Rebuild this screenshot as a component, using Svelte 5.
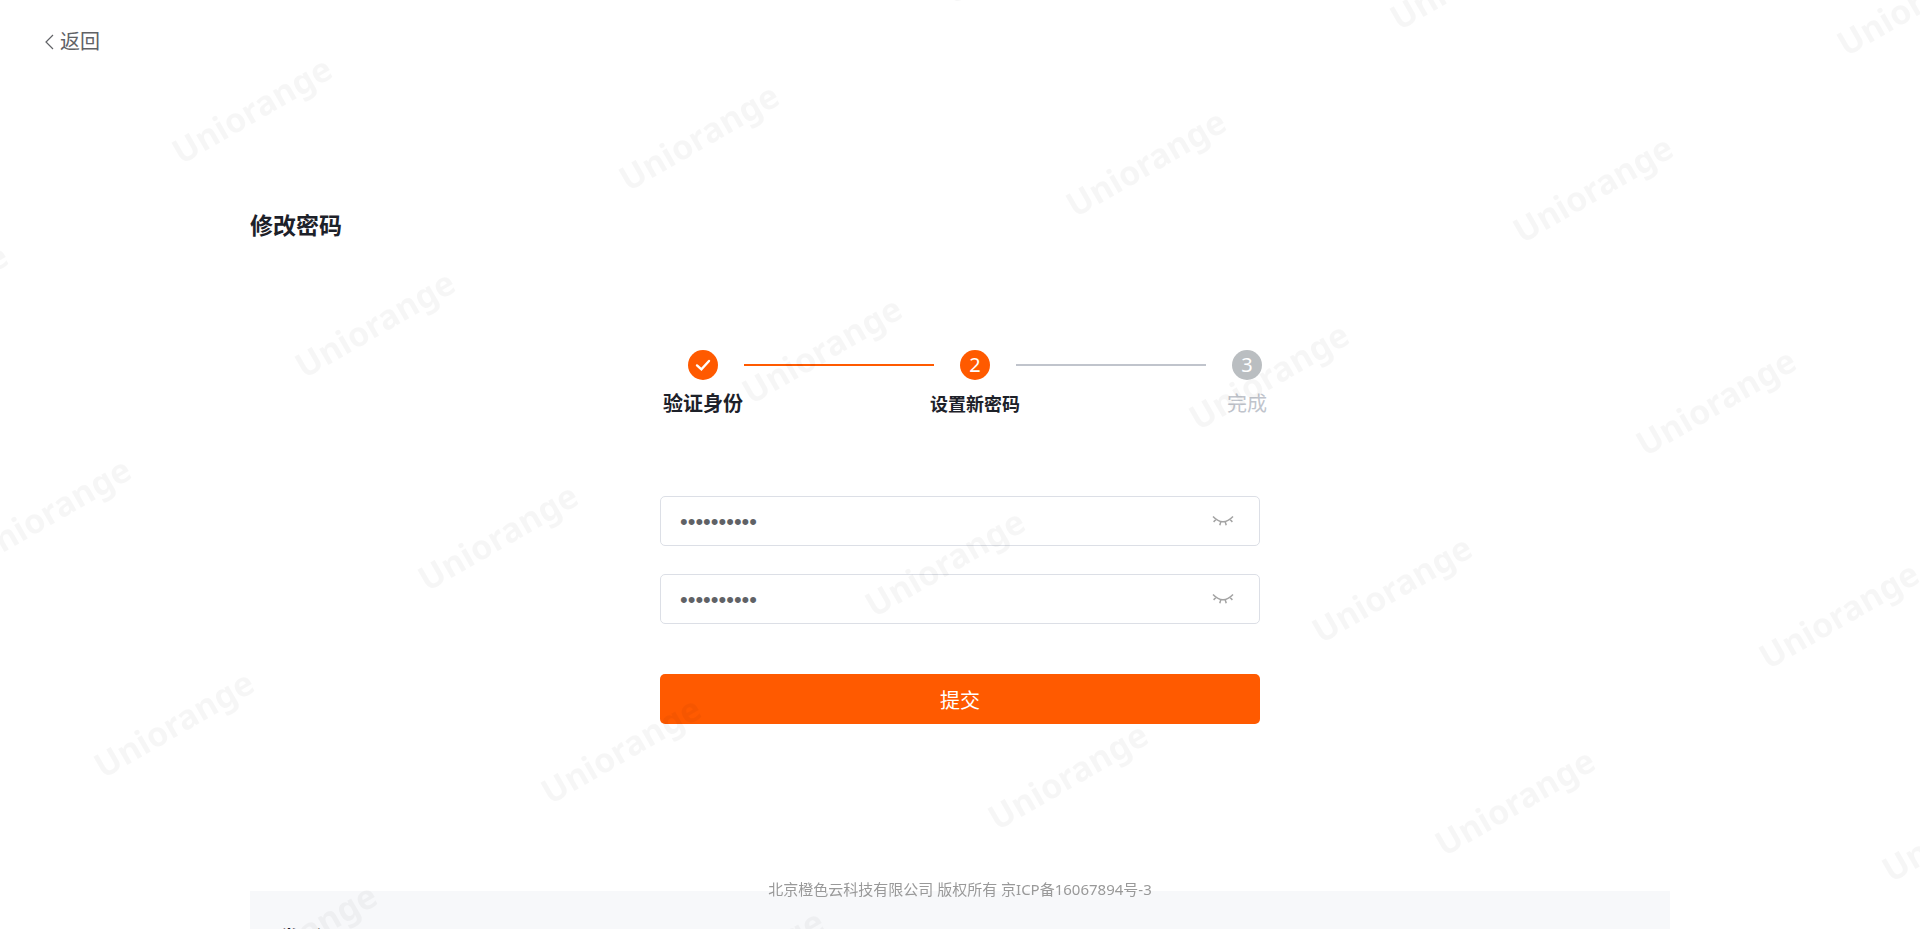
<script>
  let password = 'unior12345';
  let confirmPassword = 'unior12345';
  let showPassword = false;
  let showConfirm = false;

  const steps = [
    { title: '验证身份', status: 'finish' },
    { title: '设置新密码', status: 'process' },
    { title: '完成', status: 'wait' }
  ];

  let innerWidth = 0;
  let innerHeight = 0;

  // grid of marks laid out in a plane turned by -30deg, only the visible ones are kept
  function getMarks(width, height) {
    const angle = Math.PI / 6;
    const marks = [];
    for (let row = -1; row < 12; row++) {
      for (let col = -6; col < 8; col++) {
        const u = 163 + col * 374;
        const v = 224 + row * 246;
        const x = u * Math.cos(angle) + v * Math.sin(angle);
        const y = v * Math.cos(angle) - u * Math.sin(angle);
        if (x > -80 && x < width + 80 && y > -50 && y < height + 50) {
          marks.push({ x: Math.round(x), y: Math.round(y) });
        }
      }
    }
    return marks;
  }

  $: marks = getMarks(innerWidth, innerHeight);
</script>

<svelte:window bind:innerWidth bind:innerHeight />

<div class="page">
  <header class="header">
    <a class="back" href="#back">
      <svg width="9" height="16" viewBox="0 0 9 16" aria-hidden="true">
        <path d="M8 1L1 8l7 7" fill="none" stroke="currentColor" stroke-width="1.2" />
      </svg>
      返回
    </a>
  </header>

  <main class="main">
    <h1 class="title">修改密码</h1>

    <div class="content">
      <ol class="steps">
        {#each steps as step, i}
          {#if i > 0}
            <li class="step_line" class:active={step.status !== 'wait'} aria-hidden="true"></li>
          {/if}
          <li class="step {step.status}">
            <span class="step_icon">
              {#if step.status === 'finish'}
                <svg width="16" height="14" viewBox="0 0 16 14" aria-hidden="true">
                  <path d="M2 7.4l4.4 4L14 3" fill="none" stroke="#fff" stroke-width="2.4" stroke-linecap="round" />
                </svg>
              {:else}
                {i + 1}
              {/if}
            </span>
            <span class="step_title">{step.title}</span>
          </li>
        {/each}
      </ol>

      <form class="form" on:submit|preventDefault>
        <div class="field">
          <input type={showPassword ? 'text' : 'password'} aria-label="新密码" bind:value={password} />
          <button type="button" class="eye" aria-label="显示密码" on:click={() => (showPassword = !showPassword)}>
            <svg width="22" height="12" viewBox="0 0 22 12" aria-hidden="true">
              <path d="M1 1.5Q11 12 21 1.5M4.2 4.3L1.6 6.9M8.8 6.6L7.8 10.2M13.2 6.6l1 3.6M17.8 4.3l2.6 2.6" />
            </svg>
          </button>
        </div>
        <div class="field">
          <input type={showConfirm ? 'text' : 'password'} aria-label="确认密码" bind:value={confirmPassword} />
          <button type="button" class="eye" aria-label="显示密码" on:click={() => (showConfirm = !showConfirm)}>
            <svg width="22" height="12" viewBox="0 0 22 12" aria-hidden="true">
              <path d="M1 1.5Q11 12 21 1.5M4.2 4.3L1.6 6.9M8.8 6.6L7.8 10.2M13.2 6.6l1 3.6M17.8 4.3l2.6 2.6" />
            </svg>
          </button>
        </div>
        <button type="submit" class="submit">提交</button>
      </form>
    </div>

    <section class="faq">
      <h2>常见问题</h2>
    </section>
  </main>

  <footer class="footer">北京橙色云科技有限公司 版权所有 京ICP备16067894号-3</footer>

  <svg class="watermark" aria-hidden="true">
    {#each marks as mark}
      <text x={mark.x} y={mark.y} dy="10" transform="rotate(-30 {mark.x} {mark.y})">Uniorange</text>
    {/each}
  </svg>
</div>

<style>
  :global(body) {
    margin: 0;
    background: #fff;
  }

  .page {
    position: relative;
    height: 100vh;
    overflow: hidden;
    font-family: 'Noto Sans', 'Noto Sans CJK SC', sans-serif;
    color: #1d2129;
  }

  .header {
    padding: 26px 45px 0;
  }

  .back {
    display: inline-flex;
    align-items: center;
    gap: 6px;
    height: 32px;
    font-size: 20px;
    line-height: 32px;
    color: #606266;
    text-decoration: none;
  }

  .main {
    max-width: 1420px;
    margin: 0 auto;
    padding-top: 147px;
  }

  .title {
    margin: 0;
    font-size: 23px;
    line-height: 40px;
    font-weight: 700;
  }

  .content {
    width: 600px;
    max-width: 100%;
    margin: 105px auto 0;
  }

  .steps {
    display: flex;
    width: max-content;
    margin: 0;
    padding: 0 2px;
    list-style: none;
  }

  .step {
    display: flex;
    flex-direction: column;
    align-items: center;
    gap: 8px;
    width: 82px;
  }

  .step_icon {
    display: flex;
    align-items: center;
    justify-content: center;
    width: 30px;
    height: 30px;
    border-radius: 50%;
    background: #ff5a00;
    color: #fff;
    font-size: 20px;
    line-height: 30px;
  }

  .step_title {
    font-size: 20px;
    line-height: 32px;
    font-weight: 700;
    white-space: nowrap;
  }

  .process .step_title {
    font-size: 18px;
  }

  .wait .step_icon {
    background: #babec1;
  }

  .wait .step_title {
    font-weight: 400;
    color: #c0c4cc;
  }

  .step_line {
    width: 190px;
    height: 2px;
    margin-top: 14px;
    background: #c0c4cc;
  }

  .step_line.active {
    background: #ff5a00;
  }

  .form {
    display: flex;
    flex-direction: column;
    gap: 28px;
    margin-top: 76px;
  }

  .field {
    display: flex;
    align-items: center;
    box-sizing: border-box;
    height: 50px;
    padding: 0 25px 0 19px;
    border: 1px solid #dcdfe6;
    border-radius: 5px;
    background: #fff;
  }

  .field input {
    flex: 1;
    min-width: 0;
    padding: 2px 0 0;
    border: none;
    outline: none;
    background: none;
    font-family: 'Liberation Sans', 'Noto Sans CJK SC', sans-serif;
    font-size: 22px;
    color: #606266;
  }

  .eye {
    display: flex;
    padding: 0;
    border: none;
    background: none;
    cursor: pointer;
  }

  .eye path {
    fill: none;
    stroke: #a3a3a3;
    stroke-width: 1.5;
  }

  .submit {
    height: 50px;
    margin-top: 22px;
    padding: 0;
    border: none;
    border-radius: 5px;
    background: #ff5a00;
    color: #fff;
    font-family: inherit;
    font-size: 20px;
    cursor: pointer;
  }

  .faq {
    margin-top: 167px;
    padding: 30px;
    background: #f7f8fa;
  }

  .faq h2 {
    margin: 0;
    font-size: 18px;
    line-height: 32px;
    font-weight: 700;
  }

  .footer {
    position: fixed;
    right: 0;
    bottom: 28px;
    left: 0;
    font-size: 15px;
    line-height: 24px;
    text-align: center;
    color: #999;
  }

  .watermark {
    position: fixed;
    top: 0;
    left: 0;
    width: 100%;
    height: 100%;
    pointer-events: none;
  }

  .watermark text {
    font-size: 34px;
    font-weight: 700;
    text-anchor: middle;
    fill: #000;
    fill-opacity: 0.035;
  }
</style>
